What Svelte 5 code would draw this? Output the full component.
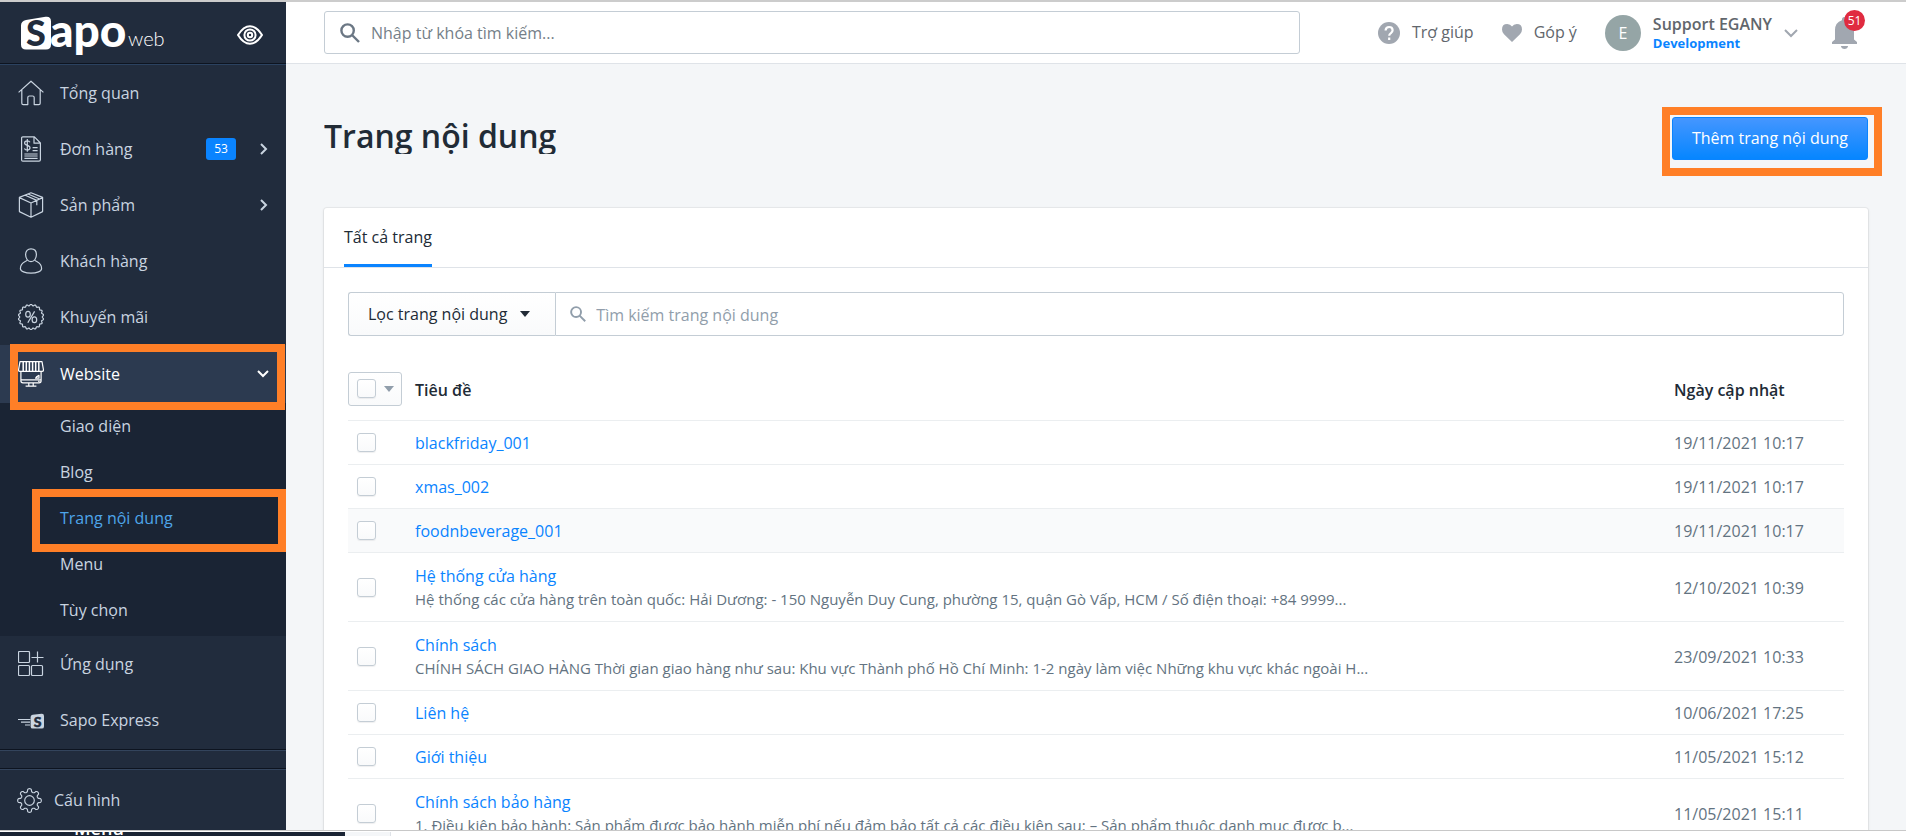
<script>
  const menu = [
    { id: 'home', label: 'Tổng quan' },
    { id: 'orders', label: 'Đơn hàng', count: 53, more: true },
    { id: 'products', label: 'Sản phẩm', more: true },
    { id: 'customers', label: 'Khách hàng' },
    { id: 'promotions', label: 'Khuyến mãi' }
  ];
  const websiteMenu = [
    { id: 'theme', label: 'Giao diện' },
    { id: 'blog', label: 'Blog' },
    { id: 'pages', label: 'Trang nội dung', current: true },
    { id: 'navigation', label: 'Menu' },
    { id: 'options', label: 'Tùy chọn' }
  ];
  const pages = [
    { title: 'blackfriday_001', date: '19/11/2021 10:17' },
    { title: 'xmas_002', date: '19/11/2021 10:17' },
    { title: 'foodnbeverage_001', date: '19/11/2021 10:17', hover: true },
    {
      title: 'Hệ thống cửa hàng',
      text: 'Hệ thống các cửa hàng trên toàn quốc: Hải Dương: - 150 Nguyễn Duy Cung, phường 15, quận Gò Vấp, HCM / Số điện thoại: +84 9999...',
      date: '12/10/2021 10:39'
    },
    {
      title: 'Chính sách',
      text: 'CHÍNH SÁCH GIAO HÀNG Thời gian giao hàng như sau: Khu vực Thành phố Hồ Chí Minh: 1-2 ngày làm việc Những khu vực khác ngoài H...',
      date: '23/09/2021 10:33'
    },
    { title: 'Liên hệ', date: '10/06/2021 17:25' },
    { title: 'Giới thiệu', date: '11/05/2021 15:12' },
    {
      title: 'Chính sách bảo hàng',
      text: '1. Điều kiện bảo hành: Sản phẩm được bảo hành miễn phí nếu đảm bảo tất cả các điều kiện sau: – Sản phẩm thuộc danh mục được b...',
      date: '11/05/2021 15:11'
    }
  ];

  // Outline of a round shape whose radius swings between two values.
  function wave(cx, cy, r, amp, lobes, power = 1) {
    const pts = [];
    const n = lobes * 14;
    for (let i = 0; i < n; i++) {
      const a = (i / n) * Math.PI * 2 - Math.PI / 2;
      const c = Math.cos(a * lobes + (Math.PI / 2) * lobes);
      const k = r + amp * Math.sign(c) * Math.pow(Math.abs(c), power);
      pts.push(`${(cx + k * Math.cos(a)).toFixed(2)} ${(cy + k * Math.sin(a)).toFixed(2)}`);
    }
    return `M${pts.join('L')}Z`;
  }
  const sealPath = wave(13, 13, 12, 0.7, 18);
  const gearPath = wave(13, 13, 10.6, 1.7, 8, 0.4);
</script>

{#snippet icon(id)}
  <svg class="icon" viewBox="0 0 26 26" aria-hidden="true">
    {#if id === 'home'}
      <path d="M.6 12.4 13 1.2l12.4 11.2M3.8 9.8v13.4q0 1.4 1.4 1.4h4.6v-7q0-1.6 1.6-1.6h3.2q1.6 0 1.6 1.6v7h4.6q1.4 0 1.4-1.4V9.8" />
    {:else if id === 'orders'}
      <path d="M4.8.8h11.6l6 6.2v16.8q0 1.4-1.4 1.4H4.8q-1.2 0-1.2-1.2V2Q3.6.8 4.8.8ZM16 1v6.2h6.2" />
      <path d="M12 6.2q-.8-1.4-2.8-1.4-2.6 0-2.6 2.2 0 1.8 2.7 2.3Q12 9.900 12 11.800 12 14 9.300 14 7.200 14 6.400 12.400M9.300 3v12.800M14.600 11.600h5M14.600 14.600h5M6.400 18h13.200M6.400 20h13.200M6.400 22.400h13.200" />
    {:else if id === 'products'}
      <path d="M13 .8 24.600 5.400v14.200L13 25.200 1.400 19.600V5.400ZM1.400 5.600 13 11l11.600-5.400M13 11v14M7.200 3.200l11.600 5.200v4.800M10 2l11.600 5" />
    {:else if id === 'customers'}
      <path d="M13 .8c3.300 0 5.400 2.300 5.400 5.800 0 3.700-2.100 7-5.400 7s-5.400-3.300-5.400-7C7.600 3.100 9.700.8 13 .8ZM9 12.200c-1 1.600-6.600 1.800-6.600 8.200 0 3 4.800 4.800 10.600 4.800s10.600-1.800 10.600-4.800c0-6.400-5.600-6.600-6.600-8.200" />
    {:else if id === 'promotions'}
      <path d={sealPath} />
      <path d="m16.600 7.400-6.800 11.400" />
      <ellipse cx="10" cy="10.200" rx="2.300" ry="2.900" />
      <ellipse cx="16.400" cy="15.800" rx="2.300" ry="2.900" />
    {:else if id === 'website'}
      <path d="M2 .6h22L25.500 9q0 1.400-1.400 1.400H1.900Q.5 10.400.5 9Z" />
      <path class="stripes" d="M5.200 1v9M8.300 1v9M11.400 1v9M14.600 1v9M17.700 1v9M20.800 1v9" />
      <path d="M2.900 10.400v9.400q0 2 2 2h16.200q2 0 2-2v-9.400M3 18.800h20M10.800 22v2.600M15.200 22v2.600M7.600 25.200h10.800M17.600 17.200q.4-1.400 3.400-2.800v2.800ZM20.200 20.300h1.400" />
    {:else if id === 'apps'}
      <path d="M1.500.5h9q1 0 1 1v9q0 1-1 1h-9q-1 0-1-1v-9q0-1 1-1ZM1.500 14.500h9q1 0 1 1v8q0 1-1 1h-9q-1 0-1-1v-8q0-1 1-1ZM14.500 14.500h9q1 0 1 1v8q0 1-1 1h-9q-1 0-1-1v-8q0-1 1-1ZM19.500.5v11M13.500 6.500h12" />
    {:else if id === 'express'}
      <path d="M0 12.500h12.500M3 15.200h9M7 18h5" />
      <path class="solid" d="m14.600 7.800 9-1Q26 6.600 26 9v10.400q0 2.200-2.200 2.200h-9q-2.200 0-2.200-2.200V10q0-2 2-2.200Z" />
      <text x="19.500" y="19.500" text-anchor="middle">S</text>
    {:else}
      <path d={gearPath} />
      <circle cx="13" cy="13" r="5" />
    {/if}
  </svg>
{/snippet}

{#snippet glass()}
  <svg class="glass" viewBox="0 0 20 20" aria-hidden="true">
    <circle cx="7.600" cy="7.600" r="6.200" />
    <path d="m12 12 7 7" />
  </svg>
{/snippet}

<div class="screen">
  <div class="app">
    <aside class="sidebar">
      <div class="brand">
        <svg class="logo" viewBox="0 0 146 42" role="img" aria-label="Sapo web">
          <path d="M6 6 25.500 2.800Q31 2 31 7.500V30.500q0 5-5 5H6q-5 0-5-5V11.500Q1 7 6 6Z" fill="#fff" />
          <text class="logo-s" x="16" y="32" text-anchor="middle">S</text>
          <text class="logo-name" x="30" y="33">apo</text>
          <text class="logo-web" x="108" y="32">web</text>
        </svg>
        <button class="eye" aria-label="Xem website">
          <svg viewBox="0 0 26 20" aria-hidden="true">
            <path d="M1 10Q6.500 1.200 13 1.200T25 10Q19.500 18.800 13 18.800T1 10Z" />
            <circle cx="13" cy="10" r="5.600" />
            <circle cx="13" cy="10" r="2.200" />
          </svg>
        </button>
      </div>

      <nav class="nav">
        {#each menu as item}
          <a class="item" href="#{item.id}">
            {@render icon(item.id)}
            <span class="label">{item.label}</span>
            {#if item.count}<span class="count">{item.count}</span>{/if}
            {#if item.more}
              <svg class="chev" viewBox="0 0 14 14" aria-hidden="true"><path d="m5 2 5 5-5 5" /></svg>
            {/if}
          </a>
        {/each}
        <a class="item active marked" href="#website">
          {@render icon('website')}
          <span class="label">Website</span>
          <svg class="chev" viewBox="0 0 14 14" aria-hidden="true"><path d="m2 4 5 5 5-5" /></svg>
        </a>
        <div class="sub">
          {#each websiteMenu as item}
            <a class="subitem" class:current={item.current} href="#{item.id}">{item.label}</a>
          {/each}
        </div>
        <a class="item" href="#apps">{@render icon('apps')}<span class="label">Ứng dụng</span></a>
        <a class="item" href="#express">{@render icon('express')}<span class="label">Sapo Express</span></a>
      </nav>
      <div class="gap"></div>
      <a class="item settings" href="#settings">{@render icon('settings')}<span class="label">Cấu hình</span></a>
    </aside>

    <div class="main">
      <header class="topbar">
        <label class="search">
          {@render glass()}
          <input type="text" placeholder="Nhập từ khóa tìm kiếm..." aria-label="Nhập từ khóa tìm kiếm" />
        </label>
        <div class="tools">
          <a class="tool" href="#help">
            <svg class="help" viewBox="0 0 22 22" aria-hidden="true">
              <circle cx="11" cy="11" r="11" fill="#a1a7b0" />
              <path d="M7.600 8.600q0-3.600 3.500-3.600t3.500 3.200q0 1.600-1.700 2.900-1.700 1.200-1.700 2.600M11.200 15.600v2.400" fill="none" stroke="#fff" stroke-width="2.200" />
            </svg>
            Trợ giúp
          </a>
          <a class="tool" href="#feedback">
            <svg class="heart" viewBox="0 0 20 18" aria-hidden="true">
              <path d="M10 18 2 10.200Q0 8 0 5.400 0 0 5.200 0 8.400 0 10 2.600 11.600 0 14.800 0 20 0 20 5.400q0 2.600-2 4.800Z" fill="#a1a7b0" />
            </svg>
            Góp ý
          </a>
          <button class="account">
            <span class="avatar">E</span>
            <span class="who"><span class="name">Support EGANY</span><span class="role">Development</span></span>
            <svg class="down" viewBox="0 0 14 14" aria-hidden="true"><path d="m1 4 6 6 6-6" /></svg>
          </button>
          <button class="bell" aria-label="Thông báo">
            <svg viewBox="0 0 25 32" aria-hidden="true">
              <path d="M12.500 0q2.600 0 2.600 3.200Q22 5.500 22 13v9.500l3 2.500v2H0v-2l3-2.500V13Q3 5.500 9.900 3.200 9.900 0 12.500 0ZM8.900 29h7.200q-.6 3-3.600 3t-3.600-3Z" fill="#a1a7b0" />
            </svg>
            <span class="alerts">51</span>
          </button>
        </div>
      </header>

      <main class="content">
        <div class="heading">
          <h1>Trang nội dung</h1>
          <div class="add-wrap"><button class="add">Thêm trang nội dung</button></div>
        </div>

        <section class="card">
          <div class="tabs"><a class="tab" href="#all">Tất cả trang</a></div>
          <div class="body">
            <div class="filter">
              <button class="filter-btn">Lọc trang nội dung <span class="caret"></span></button>
              <label class="search find">
                {@render glass()}
                <input type="text" placeholder="Tìm kiếm trang nội dung" aria-label="Tìm kiếm trang nội dung" />
              </label>
            </div>
            <table>
              <colgroup><col class="c-check" /><col /><col class="c-date" /></colgroup>
              <thead>
                <tr>
                  <th>
                    <span class="all">
                      <input type="checkbox" aria-label="Chọn tất cả" />
                      <button aria-label="Tùy chọn chọn trang"><span class="caret"></span></button>
                    </span>
                  </th>
                  <th>Tiêu đề</th>
                  <th>Ngày cập nhật</th>
                </tr>
              </thead>
              <tbody>
                {#each pages as page}
                  <tr class:hover={page.hover} class:tall={page.text}>
                    <td class="pick"><input type="checkbox" aria-label={page.title} /></td>
                    <td>
                      <a href="#page">{page.title}</a>
                      {#if page.text}<p>{page.text}</p>{/if}
                    </td>
                    <td class="date">{page.date}</td>
                  </tr>
                {/each}
              </tbody>
            </table>
          </div>
        </section>
      </main>
    </div>
  </div>
  <div class="next" aria-hidden="true"><div class="next-side"><span>Menu</span></div><div class="next-gap"></div></div>
</div>

<style>
  :global(body) {
    background: #fff;
  }
  .screen {
    --line: #dfe3e8;
    --edge: #c4cdd5;
    --blue: #0a84ff;
    --mark: #ff7f27;
    height: 100vh;
    display: flex;
    flex-direction: column;
    overflow: hidden;
    border-top: 2px solid #ccc;
    box-sizing: border-box;
    font-family: 'Open Sans', 'Noto Sans', sans-serif;
    font-size: 16px;
    line-height: 23px;
    color: #212b36;
  }
  .screen *,
  .screen *::after {
    box-sizing: border-box;
  }
  a {
    color: inherit;
    text-decoration: none;
  }
  button,
  input {
    font: inherit;
    color: inherit;
    margin: 0;
  }
  button {
    padding: 0;
    border: 0;
    background: none;
    cursor: pointer;
  }
  svg {
    display: block;
    flex: none;
  }
  .app {
    flex: 1;
    min-height: 0;
    display: flex;
    overflow: hidden;
  }

  .sidebar {
    width: 286px;
    flex: none;
    display: flex;
    flex-direction: column;
    background: #212c3d;
    color: #c9d4e0;
  }
  .brand {
    height: 62px;
    flex: none;
    display: flex;
    align-items: center;
    justify-content: space-between;
    padding: 4px 23px 0 20px;
    border-bottom: 1px solid #0d1420;
    box-shadow: 0 1px #2b4260;
  }
  .logo {
    width: 146px;
    height: 42px;
    overflow: visible;
  }
  .logo-s,
  .logo-name {
    font: 900 46px Lato, sans-serif;
    fill: #fff;
  }
  .logo-s {
    font-size: 36px;
    fill: #212c3d;
  }
  .logo-web {
    font: 300 20px Lato, sans-serif;
    fill: #fff;
  }
  .eye svg {
    width: 26px;
    height: 20px;
    fill: none;
    stroke: #fff;
    stroke-width: 2;
  }
  .nav {
    padding-top: 1px;
  }
  .item {
    height: 56px;
    display: flex;
    align-items: center;
    padding: 0 16px 0 18px;
  }
  .icon {
    width: 26px;
    height: 26px;
    margin-right: 16px;
    fill: none;
    stroke: currentColor;
    stroke-width: 1.2;
    stroke-linejoin: round;
  }
  .icon .solid {
    fill: currentColor;
    stroke: none;
  }
  .icon .stripes {
    stroke-width: 1.5;
  }
  .icon text {
    font: 900 14px Lato, sans-serif;
    fill: #212c3d;
    stroke: #212c3d;
    stroke-width: 0.5;
  }
  .label {
    flex: 1;
  }
  .count {
    width: 30px;
    height: 22px;
    line-height: 22px;
    margin-right: 20px;
    border-radius: 3px;
    background: var(--blue);
    color: #fff;
    font-size: 12px;
    text-align: center;
  }
  .chev,
  .down {
    width: 14px;
    height: 14px;
    fill: none;
    stroke: currentColor;
    stroke-width: 2;
  }
  .active {
    height: 58px;
    background: #2c3a50;
    color: #fff;
  }
  .marked,
  .current,
  .add-wrap {
    position: relative;
  }
  .marked::after,
  .current::after,
  .add-wrap::after {
    content: '';
    position: absolute;
    border: 8px solid var(--mark);
    pointer-events: none;
    z-index: 1;
  }
  .marked::after {
    inset: -1px 1px -7px 10px;
  }
  .current::after {
    inset: -6px 0 -11px 32px;
  }
  .add-wrap::after {
    inset: -10px -14px -16px -10px;
  }
  .sub {
    padding-bottom: 3px;
    background: #1a2434;
  }
  .subitem {
    height: 46px;
    display: flex;
    align-items: center;
    padding-left: 60px;
  }
  .current {
    color: #4ea6ea;
  }
  .gap {
    height: 20px;
    flex: none;
    margin-top: 1px;
    border: solid #0d1420;
    border-width: 1px 0;
    box-shadow: inset 0 1px #33445c, 0 1px #33445c;
  }
  .settings {
    height: 62px;
    flex: none;
    padding-left: 17px;
  }
  .settings .icon {
    width: 25px;
    height: 25px;
    margin-right: 12px;
  }

  .main {
    flex: 1;
    min-width: 0;
    display: flex;
    flex-direction: column;
    background: #f4f6f8;
  }
  .topbar {
    height: 62px;
    flex: none;
    display: flex;
    align-items: center;
    justify-content: space-between;
    gap: 40px;
    padding: 0 49px 0 38px;
    background: #fff;
    border-bottom: 1px solid var(--line);
  }
  .search {
    flex: 1;
    height: 43px;
    display: flex;
    align-items: center;
    gap: 11px;
    padding: 0 15px;
    border: 1px solid var(--edge);
    border-radius: 3px;
    background: #fff;
  }
  .topbar .search {
    max-width: 976px;
  }
  .glass {
    width: 20px;
    height: 20px;
    fill: none;
    stroke: #6b7784;
    stroke-width: 2.400;
  }
  .search input {
    flex: 1;
    min-width: 0;
    padding: 2px 0 0;
    border: 0;
    outline: 0;
    background: none;
  }
  .search input::placeholder {
    color: #757f89;
    opacity: 1;
  }
  .tools {
    display: flex;
    align-items: center;
    color: #61666c;
  }
  .tool {
    display: flex;
    align-items: center;
    gap: 12px;
    margin-right: 28px;
  }
  .help {
    width: 22px;
    height: 22px;
  }
  .heart {
    width: 20px;
    height: 18px;
  }
  .account {
    display: flex;
    align-items: center;
    gap: 12px;
    margin-right: 34px;
    text-align: left;
  }
  .avatar {
    width: 36px;
    height: 36px;
    border-radius: 50%;
    background: #95a5a6;
    color: #fff;
    line-height: 36px;
    text-align: center;
  }
  .who {
    display: grid;
  }
  .name {
    font-weight: 600;
    line-height: 20px;
  }
  .role {
    font-size: 13px;
    font-weight: 700;
    line-height: 18px;
    color: var(--blue);
  }
  .down {
    stroke: #a1a7b0;
  }
  .bell {
    position: relative;
  }
  .bell svg {
    width: 25px;
    height: 32px;
  }
  .alerts {
    position: absolute;
    top: -7px;
    right: -8px;
    width: 21px;
    height: 21px;
    border-radius: 50%;
    background: #e02b40;
    color: #fff;
    font-size: 12px;
    line-height: 21px;
    text-align: center;
  }

  .content {
    flex: 1;
    min-height: 0;
    overflow: hidden;
    padding: 53px 38px 0;
  }
  .heading {
    display: flex;
    align-items: flex-start;
    justify-content: space-between;
    margin-bottom: 48px;
  }
  h1 {
    margin: 0;
    overflow: hidden;
    font-size: 32px;
    font-weight: 600;
    line-height: 37px;
  }
  .add {
    height: 43px;
    padding: 0 19px;
    border: 1px solid var(--blue);
    border-radius: 3px;
    background: linear-gradient(#4596ff, #0686ff);
    color: #fff;
  }
  .card {
    border-radius: 3px;
    background: #fff;
    box-shadow: 0 0 0 1px rgba(63, 63, 68, 0.06), 0 1px 3px rgba(63, 63, 68, 0.15);
  }
  .tabs {
    display: flex;
    height: 60px;
    padding: 0 20px;
    border-bottom: 1px solid var(--line);
  }
  .tab {
    padding-top: 18px;
    border-bottom: 3px solid var(--blue);
  }
  .body {
    padding: 24px 24px 0;
  }
  .filter {
    display: flex;
  }
  .filter-btn {
    display: flex;
    align-items: center;
    gap: 13px;
    padding: 0 25px 0 19px;
    border: 1px solid var(--edge);
    border-right: 0;
    border-radius: 3px 0 0 3px;
    background: linear-gradient(#fff, #f9fafb);
  }
  .caret {
    border: solid transparent;
    border-width: 6px 5px 0;
    border-top-color: currentColor;
  }
  .find {
    height: 44px;
    gap: 10px;
    padding: 0 14px;
    border-radius: 0 3px 3px 0;
  }
  .find .glass {
    width: 16px;
    height: 16px;
    stroke: #919eab;
  }
  .find input::placeholder {
    color: #919eab;
  }
  table {
    width: 100%;
    table-layout: fixed;
    border-collapse: separate;
    border-spacing: 0;
  }
  .c-check {
    width: 67px;
  }
  .c-date {
    width: 170px;
  }
  th,
  td {
    padding: 0;
    border-bottom: 1px solid #ebeef0;
    text-align: left;
  }
  th {
    height: 85px;
    padding-top: 25px;
    font-weight: 600;
  }
  .all {
    width: 54px;
    height: 34px;
    display: flex;
    align-items: center;
    gap: 8px;
    padding-left: 8px;
    margin-bottom: 4px;
    border: 1px solid var(--edge);
    border-radius: 3px;
    background: linear-gradient(#fff, #f9fafb);
    color: #919eab;
  }
  .all button {
    display: flex;
  }
  input[type='checkbox'] {
    appearance: none;
    display: block;
    width: 19px;
    height: 19px;
    border: 1px solid var(--edge);
    border-radius: 3px;
    background: linear-gradient(#fff, #f9fafb);
    box-shadow: 0 1px 1px rgba(22, 29, 37, 0.07);
  }
  td {
    height: 44px;
    padding-top: 2px;
  }
  .tall td {
    height: 69px;
  }
  td.pick {
    padding: 0 0 0 9px;
  }
  td a {
    color: var(--blue);
  }
  td p {
    margin: 0;
    overflow: hidden;
    font-size: 15px;
    line-height: 23px;
    white-space: nowrap;
    color: #637381;
  }
  .date {
    color: #637381;
  }
  .hover td {
    background: #f9fafb;
  }

  .next {
    display: flex;
    flex: none;
    height: 6px;
    overflow: hidden;
    border-top: 1px solid #c8c8c8;
    padding-top: 1px;
    background: #fff;
  }
  .next-side {
    width: 345px;
    padding-left: 74px;
    background: #1a2434;
    color: #fff;
    font-size: 18px;
    font-weight: 600;
    line-height: 0;
  }
  .next-side span {
    display: block;
    margin-top: -4px;
  }
  .next-gap {
    width: 46px;
    background: #f4f6f8;
    border-right: 1px solid var(--line);
  }
</style>
